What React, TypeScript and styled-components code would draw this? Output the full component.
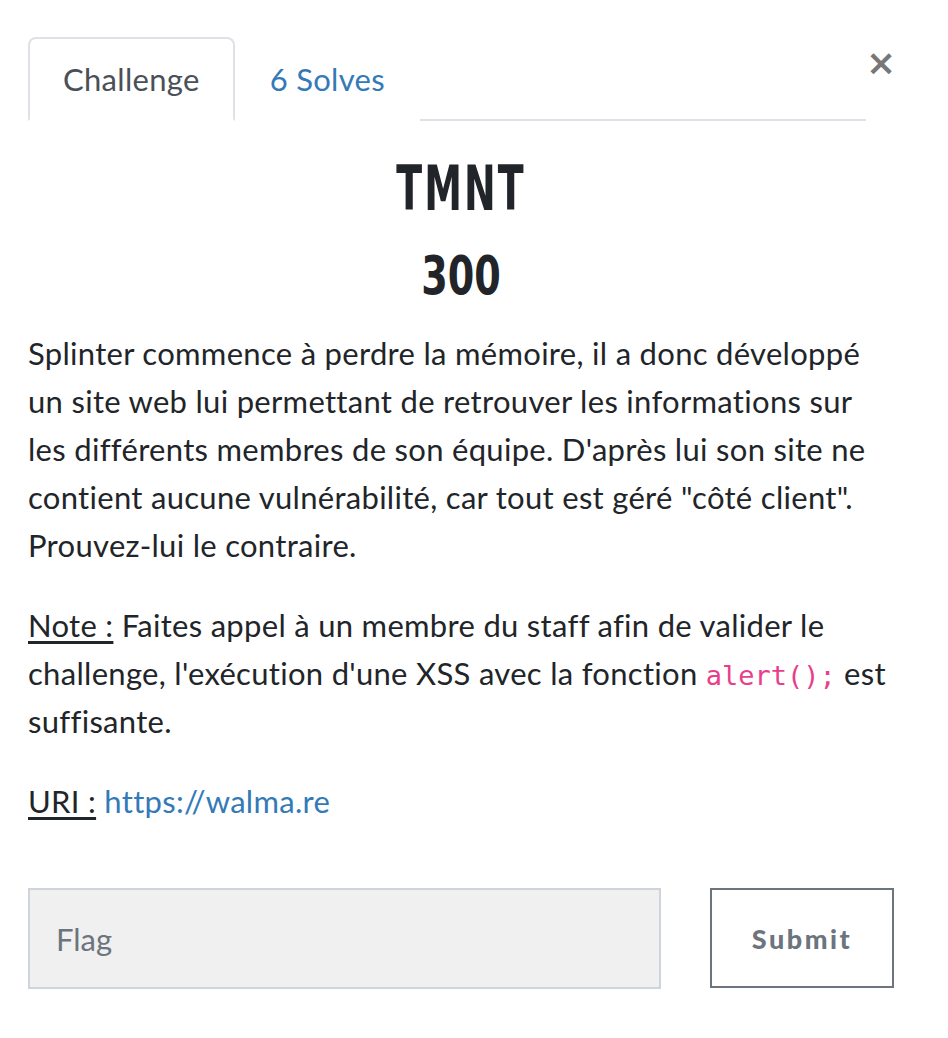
import styled, { createGlobalStyle } from 'styled-components';

const GlobalStyle = createGlobalStyle`
  html, body {
    margin: 0;
    padding: 0;
    background: #ffffff;
  }
  body {
    font-family: Lato, 'Open Sans', sans-serif;
    color: #212529;
  }
`;

const Modal = styled.div`
  width: 948px;
  box-sizing: border-box;
  padding: 37px 54px 40px 28px;
`;

const Header = styled.div`
  display: flex;
  align-items: flex-start;
`;

const TabList = styled.ul`
  flex: 1;
  display: flex;
  margin: 0;
  padding: 0;
  list-style: none;
  border-bottom: 2px solid #dee2e6;
`;

const Tab = styled.li<{ $active?: boolean }>`
  margin-bottom: -2px;
  padding: 20px 33px;
  font-size: 31px;
  line-height: 40px;
  letter-spacing: 0.3px;
  border: 2px solid ${p => (p.$active ? '#dee2e6' : 'transparent')};
  border-bottom-color: ${p => (p.$active ? '#ffffff' : 'transparent')};
  border-radius: 8px 8px 0 0;
  color: ${p => (p.$active ? '#495057' : '#337ab7')};
  background: #ffffff;
  cursor: pointer;
`;

const Close = styled.button`
  width: 28px;
  margin-top: 10px;
  padding: 0;
  border: none;
  background: none;
  color: #777777;
  font-family: 'DejaVu Sans', sans-serif;
  font-weight: bold;
  font-size: 36px;
  line-height: 32px;
  text-align: right;
  cursor: pointer;
`;

const Title = styled.h2`
  margin: 30px 0 0;
  text-align: center;
  font-family: 'DejaVu Sans Condensed', 'DejaVu Sans', sans-serif;
  font-weight: bold;
  font-size: 62px;
  line-height: 76px;
  letter-spacing: 3px;
  color: #212529;
  transform: scaleX(0.68);
`;

const Points = styled.h3`
  margin: 16px 0 0;
  text-align: center;
  font-family: 'DejaVu Sans Condensed', 'DejaVu Sans', sans-serif;
  font-weight: bold;
  font-size: 53px;
  line-height: 66px;
  color: #212529;
  transform: scaleX(0.8);
`;

const Description = styled.div`
  margin-top: 20px;
  font-size: 31px;
  line-height: 48px;
  letter-spacing: 0.3px;
`;

const Para = styled.p`
  margin: 0 0 32px;
`;

const Label = styled.span`
  text-decoration: underline;
  text-underline-offset: 4px;
`;

const Code = styled.code`
  font-family: 'DejaVu Sans Mono', monospace;
  font-size: 27px;
  line-height: 1;
  letter-spacing: 0;
  color: #e83e8c;
`;

const Link = styled.a`
  color: #337ab7;
  text-decoration: none;
`;

const Form = styled.form`
  display: flex;
  gap: 49px;
  margin-top: 63px;
`;

const FlagInput = styled.input`
  flex: 1;
  height: 101px;
  box-sizing: border-box;
  padding: 0 26px;
  border: 2px solid #ced4da;
  background: #f0f0f0;
  font-family: Lato, sans-serif;
  font-size: 31px;
  color: #495057;
  &::placeholder {
    color: #6c757d;
  }
`;

const SubmitButton = styled.button`
  width: 184px;
  height: 100px;
  box-sizing: border-box;
  border: 2px solid #6c757d;
  background: #ffffff;
  color: #6c757d;
  font-family: Lato, sans-serif;
  font-weight: 900;
  font-size: 27px;
  letter-spacing: 2.5px;
  cursor: pointer;
`;

export default function App() {
  return (
    <>
      <GlobalStyle />
      <Modal>
        <Header>
          <TabList>
            <Tab $active>Challenge</Tab>
            <Tab>6 Solves</Tab>
          </TabList>
          <Close aria-label='Close'>×</Close>
        </Header>
        <Title>TMNT</Title>
        <Points>300</Points>
        <Description>
          <Para>
            Splinter commence à perdre la mémoire, il a donc développé un site web lui permettant de
            retrouver les informations sur les différents membres de son équipe. D'après lui son site ne
            contient aucune vulnérabilité, car tout est géré "côté client". Prouvez-lui le contraire.
          </Para>
          <Para>
            <Label>Note :</Label> Faites appel à un membre du staff afin de valider le challenge,
            l'exécution d'une XSS avec la fonction <Code>alert();</Code> est suffisante.
          </Para>
          <Para>
            <Label>URI :</Label> <Link href='#'>https://walma.re</Link>
          </Para>
        </Description>
        <Form onSubmit={e => e.preventDefault()}>
          <FlagInput placeholder='Flag' />
          <SubmitButton type='submit'>Submit</SubmitButton>
        </Form>
      </Modal>
    </>
  );
}
